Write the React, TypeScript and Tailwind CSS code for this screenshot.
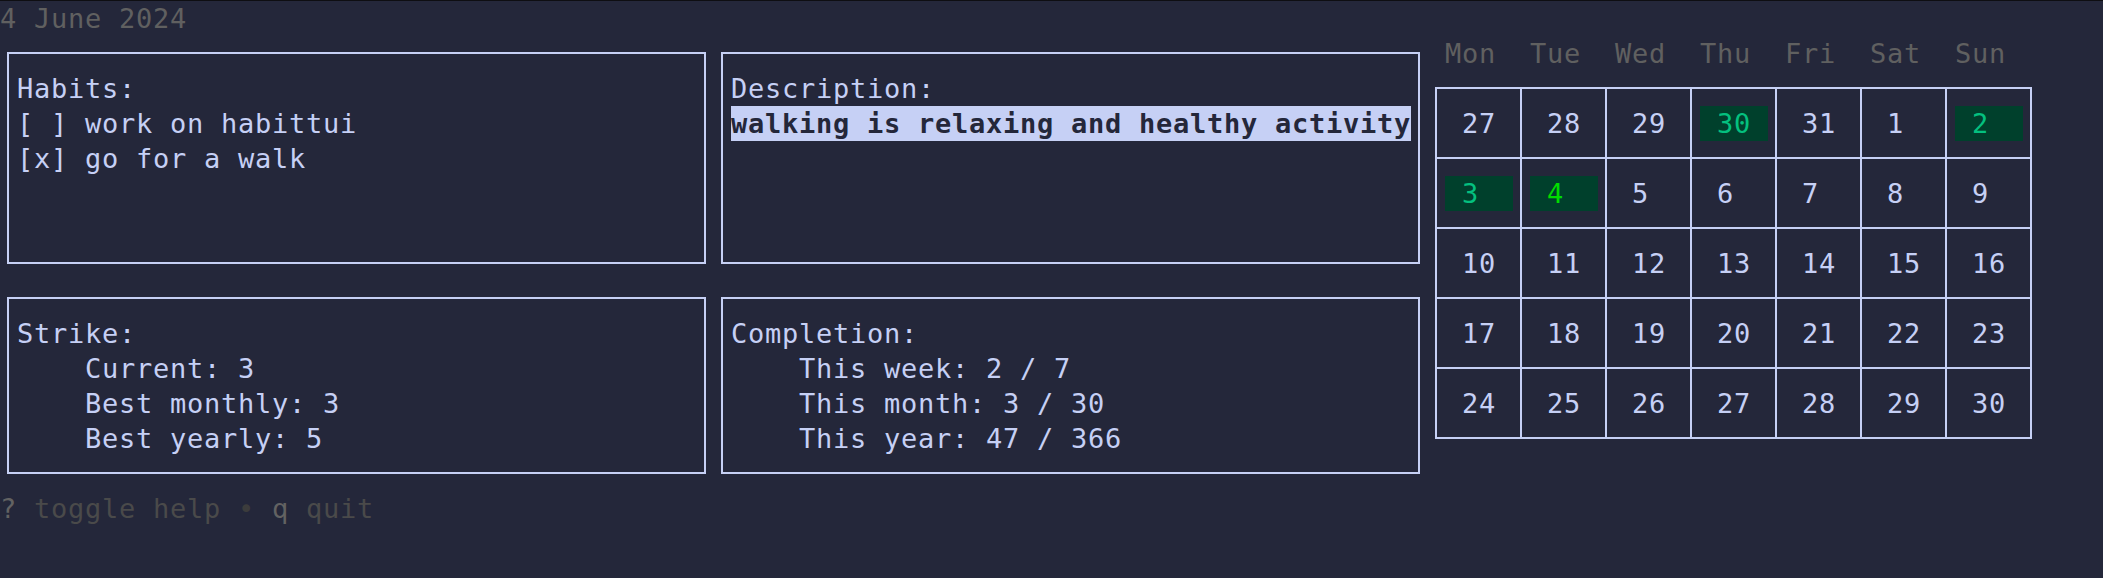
import React from "react";

type Day = { n: number; kind?: "done" | "today" };

const weeks: Day[][] = [
  [{ n: 27 }, { n: 28 }, { n: 29 }, { n: 30, kind: "done" }, { n: 31 }, { n: 1 }, { n: 2, kind: "done" }],
  [{ n: 3, kind: "done" }, { n: 4, kind: "today" }, { n: 5 }, { n: 6 }, { n: 7 }, { n: 8 }, { n: 9 }],
  [{ n: 10 }, { n: 11 }, { n: 12 }, { n: 13 }, { n: 14 }, { n: 15 }, { n: 16 }],
  [{ n: 17 }, { n: 18 }, { n: 19 }, { n: 20 }, { n: 21 }, { n: 22 }, { n: 23 }],
  [{ n: 24 }, { n: 25 }, { n: 26 }, { n: 27 }, { n: 28 }, { n: 29 }, { n: 30 }],
];

const dayNames = ["Mon", "Tue", "Wed", "Thu", "Fri", "Sat", "Sun"];

function TopBox({ children }: { children: React.ReactNode }) {
  return (
    <div className="w-[714px] h-[245px] pl-[7px] pt-[16px]">
      <div className="w-[699px] h-[212px] border-2 border-[#c6d0f5] pl-[8px] pt-[17px]">{children}</div>
    </div>
  );
}

function BottomBox({ children }: { children: React.ReactNode }) {
  return (
    <div className="w-[714px] h-[210px] pl-[7px] pt-[16px]">
      <div className="w-[699px] h-[177px] border-2 border-[#c6d0f5] pl-[8px] pt-[17px]">{children}</div>
    </div>
  );
}

function Cell({ d }: { d: Day }) {
  const inner =
    d.kind === "done"
      ? "w-[68px] h-[35px] pl-[17px] bg-[#00402c] text-[#04c07f]"
      : d.kind === "today"
      ? "w-[68px] h-[35px] pl-[17px] bg-[#00402c] text-[#00dd00]"
      : "w-[68px] h-[35px] pl-[17px]";
  return (
    <div className="w-[85px] h-[70px] border-r-2 border-b-2 border-[#c6d0f5] pl-[8px] pt-[17px]">
      <div className={inner}>{d.n}</div>
    </div>
  );
}

export default function App() {
  return (
    <div className="w-[2103px] h-[578px] overflow-hidden bg-[#24273a] border-t border-[#0e0e12] text-[#c6d0f5] text-[27px] leading-[35px] tracking-[0.745px] whitespace-pre font-['DejaVu_Sans_Mono',monospace]">
      <div className="h-[35px] text-[#606060]">4 June 2024</div>
      <div className="h-[455px] flex">
        <div className="w-[1428px] flex flex-col">
          <div className="flex">
            <TopBox>
              <div>Habits:</div>
              <div>[ ] work on habittui</div>
              <div>[x] go for a walk</div>
            </TopBox>
            <TopBox>
              <div>Description:</div>
              <div>
                <span className="inline-block h-[35px] bg-[#c6d0f5] text-[#24273a] font-bold">walking is relaxing and healthy activity</span>
              </div>
            </TopBox>
          </div>
          <div className="flex">
            <BottomBox>
              <div>Strike:</div>
              <div>    Current: 3</div>
              <div>    Best monthly: 3</div>
              <div>    Best yearly: 5</div>
            </BottomBox>
            <BottomBox>
              <div>Completion:</div>
              <div>    This week: 2 / 7</div>
              <div>    This month: 3 / 30</div>
              <div>    This year: 47 / 366</div>
            </BottomBox>
          </div>
        </div>
        <div className="flex flex-col">
          <div className="h-[35px] flex pl-[17px] text-[#606060]">
            {dayNames.map((n) => (
              <div key={n} className="w-[85px]">{n}</div>
            ))}
          </div>
          <div className="pl-[7px] pt-[16px]">
            <div className="grid grid-cols-[repeat(7,85px)] w-fit border-l-2 border-t-2 border-[#c6d0f5]">
              {weeks.flat().map((d, i) => (
                <Cell key={i} d={d} />
              ))}
            </div>
          </div>
        </div>
      </div>
      <div className="h-[35px]">
        <span className="text-[#626262]">?</span>
        <span className="text-[#4a4a4a]"> toggle help</span>
        <span className="text-[#3c3c3c]"> • </span>
        <span className="text-[#626262]">q</span>
        <span className="text-[#4a4a4a]"> quit</span>
      </div>
    </div>
  );
}
